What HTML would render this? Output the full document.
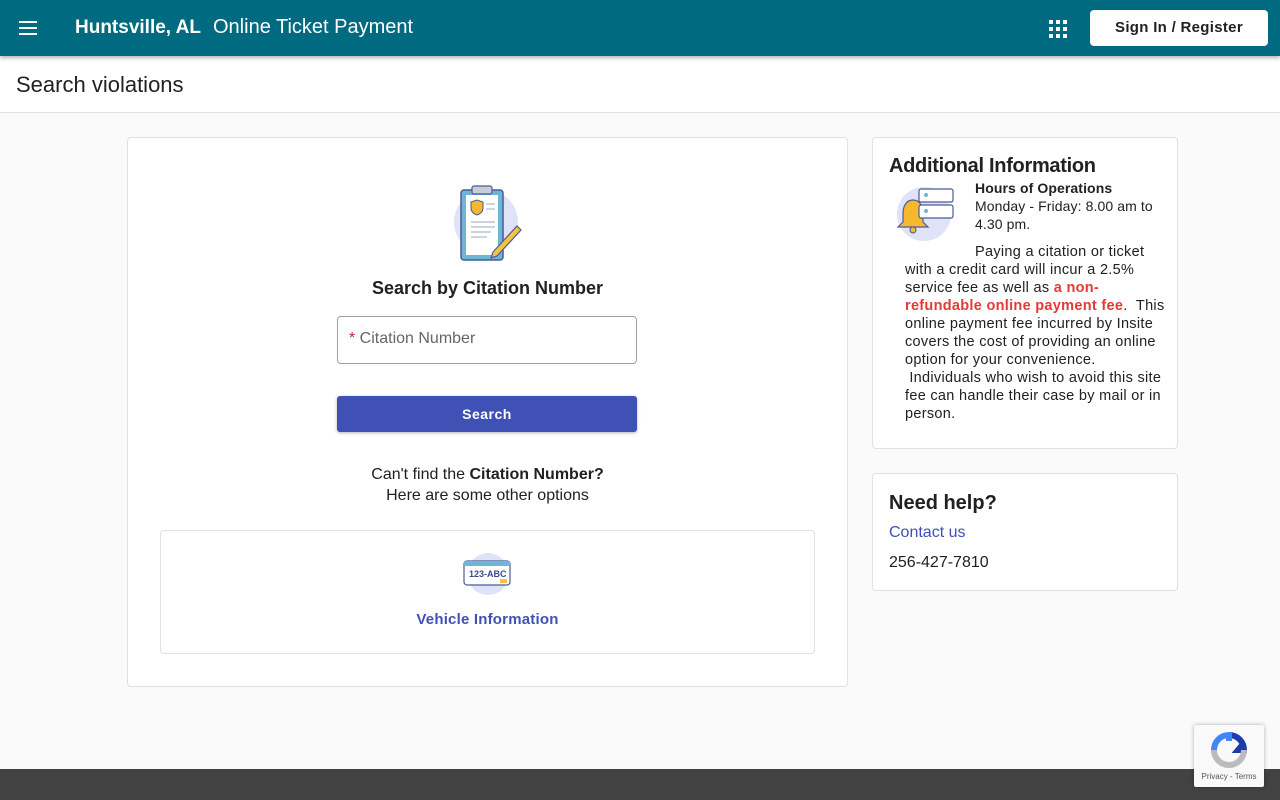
<!DOCTYPE html>
<html><head><meta charset="utf-8"><style>
*{box-sizing:border-box;margin:0;padding:0}
body{width:1280px;height:800px;overflow:hidden;background:#fafafa;font-family:"Liberation Sans",sans-serif;color:#212121;position:relative}
.hdr{position:absolute;left:0;top:0;width:1280px;height:56px;background:#006b80;color:#fff;box-shadow:0 2px 4px rgba(0,0,0,.3);z-index:2}
.tb{position:absolute;left:0;top:56px;width:1280px;height:57px;background:#fff;border-bottom:1px solid #e0e0e0}
.card{position:absolute;background:#fff;border:1px solid #e0e0e0;border-radius:4px}
.foot{position:absolute;left:0;top:769px;width:1280px;height:31px;background:#424242}
</style></head><body>
<div class="hdr">
<svg style="position:absolute;left:18px;top:18px" width="20" height="20"><rect x="1" y="3" width="18" height="2" fill="#fff"/><rect x="1" y="9" width="18" height="2" fill="#fff"/><rect x="1" y="15" width="18" height="2" fill="#fff"/></svg>
<div style="position:absolute;left:75px;top:17px;font-size:19px;font-weight:bold">Huntsville, AL</div>
<div style="position:absolute;left:213px;top:16px;font-size:20px">Online Ticket Payment</div>
<svg style="position:absolute;left:1049px;top:20px" width="18" height="18" fill="#fff"><rect x="0" y="0" width="4" height="4"/><rect x="7" y="0" width="4" height="4"/><rect x="14" y="0" width="4" height="4"/><rect x="0" y="7" width="4" height="4"/><rect x="7" y="7" width="4" height="4"/><rect x="14" y="7" width="4" height="4"/><rect x="0" y="14" width="4" height="4"/><rect x="7" y="14" width="4" height="4"/><rect x="14" y="14" width="4" height="4"/></svg>
<div style="position:absolute;left:1090px;top:10px;width:178px;height:36px;background:#fff;border-radius:4px;color:#212121;font-size:15px;font-weight:bold;text-align:center;line-height:36px;letter-spacing:.3px">Sign In / Register</div>
</div>
<div class="tb"><div style="position:absolute;left:16px;top:16px;font-size:22px">Search violations</div></div>

<div class="card" style="left:127px;top:137px;width:721px;height:550px">
<svg style="position:absolute;left:323px;top:44px" width="76" height="82" viewBox="0 0 76 82">
<circle cx="35" cy="40" r="32" fill="#dfe3f7"/>
<rect x="10" y="8" width="42" height="70" rx="3" fill="#6fb5d6" stroke="#4a5a9a" stroke-width="1.5"/>
<rect x="15" y="13" width="32" height="60" fill="#fff"/>
<rect x="21" y="4" width="20" height="8" rx="2" fill="#c9cbd6" stroke="#4a5a9a" stroke-width="1.2"/>
<path d="M20 20 l6-2 6 2 v6 c0 4-3 6-6 7 c-3-1-6-3-6-7z" fill="#f5b82e" stroke="#4a5a9a" stroke-width="1"/>
<g stroke="#b0b6c8" stroke-width="1.2"><line x1="35" y1="22" x2="44" y2="22"/><line x1="35" y1="27" x2="44" y2="27"/><line x1="20" y1="40" x2="44" y2="40"/><line x1="20" y1="45" x2="44" y2="45"/><line x1="20" y1="50" x2="40" y2="50"/><line x1="20" y1="55" x2="36" y2="55"/></g>
<path d="M66 44 l4 4 -24 26 -6 2 2-6z" fill="#f5c242" stroke="#4a5a9a" stroke-width="1.2"/>
</svg>
<div style="position:absolute;left:0;width:100%;top:140px;text-align:center;font-size:18px;font-weight:bold">Search by Citation Number</div>
<div style="position:absolute;left:209px;top:178px;width:300px;height:48px;border:1px solid #9e9e9e;border-radius:4px;font-size:16px;color:#666;padding:13px 0 0 11px"><span style="color:#c62828">*</span> Citation Number</div>
<div style="position:absolute;left:209px;top:258px;width:300px;height:36px;background:#3f51b5;border-radius:3px;color:#fff;font-size:14px;font-weight:bold;text-align:center;line-height:36px;letter-spacing:.5px;box-shadow:0 1px 3px rgba(0,0,0,.3)">Search</div>
<div style="position:absolute;left:0;width:100%;top:326px;text-align:center;font-size:16px;line-height:21px">Can't find the <b>Citation Number?</b><br>Here are some other options</div>
<div style="position:absolute;left:32px;top:392px;width:655px;height:124px;border:1px solid #e0e0e0;border-radius:4px">
<svg style="position:absolute;left:301px;top:21px" width="50" height="44"><circle cx="26" cy="22" r="21" fill="#dfe3f7"/><rect x="2" y="9" width="46" height="24" rx="3" fill="#fff" stroke="#4a5a9a" stroke-width="1.2"/><rect x="2" y="9" width="46" height="5" fill="#6fb5d6"/><text x="7" y="25" font-size="9" font-weight="bold" fill="#3a4a8a" font-family="Liberation Sans">123-ABC</text><rect x="38" y="27" width="7" height="4" fill="#f5c242"/></svg>
<div style="position:absolute;left:0;width:100%;top:80px;text-align:center;font-size:15px;font-weight:bold;color:#3f51b5;letter-spacing:.2px">Vehicle Information</div>
</div>
</div>

<div class="card" style="left:872px;top:137px;width:306px;height:312px">
<div style="position:absolute;left:16px;top:17px;font-size:20px;font-weight:bold;letter-spacing:-.3px">Additional Information</div>
<svg style="position:absolute;left:23px;top:48px" width="60" height="56"><circle cx="28" cy="28" r="27" fill="#dfe3f7"/><path d="M17 14 c-8 0-10 8-10 14 v8 l-5 5 h30 l-5-5 v-8 c0-6-2-14-10-14z" fill="#f5b82e" stroke="#4a5a9a" stroke-width="1.2"/><circle cx="17" cy="44" r="3" fill="#f5b82e" stroke="#4a5a9a"/><rect x="23" y="3" width="34" height="13" rx="2" fill="#fff" stroke="#4a5a9a" stroke-width="1.2"/><rect x="23" y="19" width="34" height="13" rx="2" fill="#fff" stroke="#4a5a9a" stroke-width="1.2"/><circle cx="30" cy="9" r="2" fill="#6fb5d6"/><circle cx="30" cy="25" r="2" fill="#6fb5d6"/></svg>
<div style="position:absolute;left:102px;top:41px;font-size:14px;line-height:18px;width:195px;letter-spacing:.1px"><b>Hours of Operations</b><br>Monday - Friday: 8.00 am to 4.30 pm.</div>
<div style="position:absolute;left:32px;top:105px;width:262px;font-size:14.5px;line-height:18px;text-indent:70px;letter-spacing:.3px">Paying a citation or ticket with a credit card will incur a 2.5% service fee as well as <b style="color:#e53935">a non-refundable online payment fee</b>.&nbsp; This online payment fee incurred by Insite covers the cost of providing an online option for your convenience. &nbsp;Individuals who wish to avoid this site fee can handle their case by mail or in person.</div>
</div>

<div class="card" style="left:872px;top:473px;width:306px;height:118px">
<div style="position:absolute;left:16px;top:18px;font-size:20px;font-weight:bold">Need help?</div>
<div style="position:absolute;left:16px;top:50px;font-size:16px;color:#3f51b5">Contact us</div>
<div style="position:absolute;left:16px;top:80px;font-size:16px">256-427-7810</div>
</div>

<div class="foot"></div>
<div style="position:absolute;left:1194px;top:725px;width:70px;height:62px;background:#f9f9f9;box-shadow:0 0 4px rgba(0,0,0,.3);border-radius:2px">
<svg style="position:absolute;left:17px;top:7px" width="36" height="36" viewBox="0 0 36 36"><path d="M18 3 a15 15 0 0 1 15 15 h-6 l5-6" fill="none" stroke="#1c3aa9" stroke-width="6"/><path d="M3 18 a15 15 0 0 1 15-15 v6" fill="none" stroke="#4285f4" stroke-width="6"/><path d="M33 18 a15 15 0 0 1-30 0" fill="none" stroke="#bbb" stroke-width="6"/></svg>
<div style="position:absolute;left:0;width:100%;top:47px;text-align:center;font-size:8px;color:#555">Privacy - Terms</div>
</div>
</body></html>
